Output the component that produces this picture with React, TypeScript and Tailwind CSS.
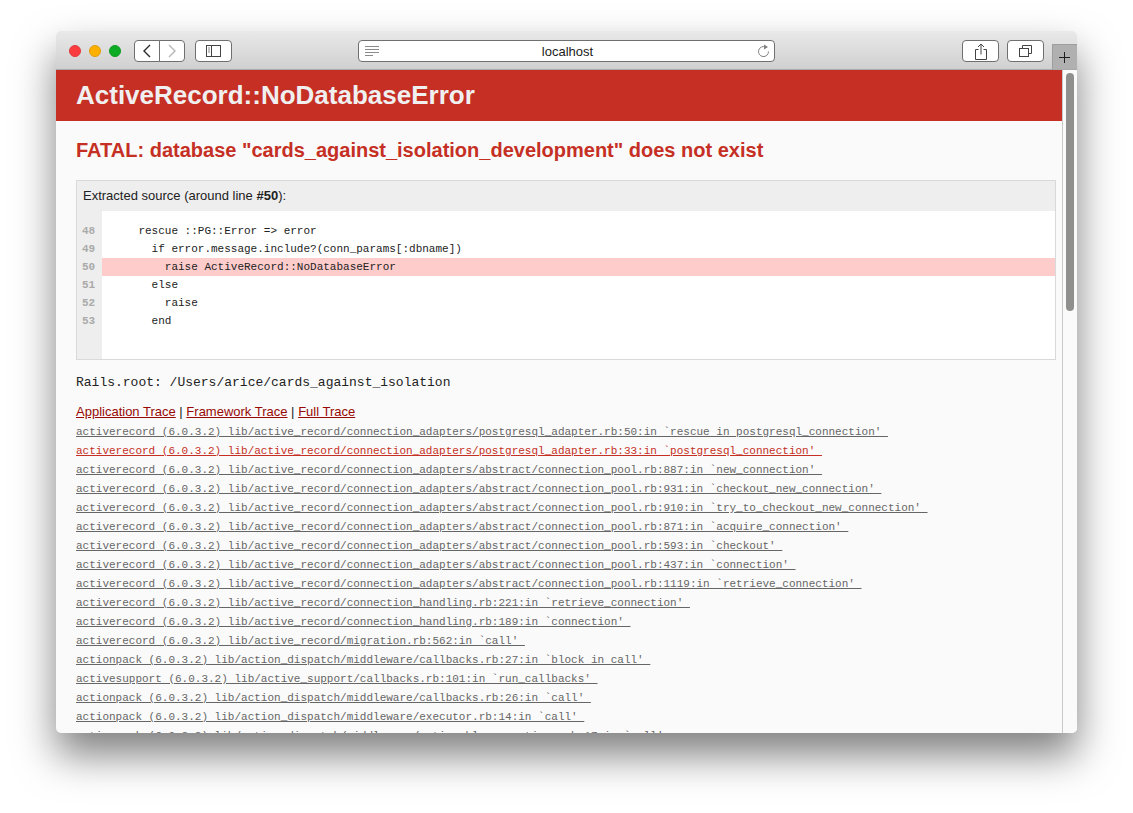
const source = [
  { num: 48, code: "    rescue ::PG::Error => error" },
  { num: 49, code: "      if error.message.include?(conn_params[:dbname])" },
  { num: 50, code: "        raise ActiveRecord::NoDatabaseError", active: true },
  { num: 51, code: "      else" },
  { num: 52, code: "        raise" },
  { num: 53, code: "      end" },
];

const trace = [
  "activerecord (6.0.3.2) lib/active_record/connection_adapters/postgresql_adapter.rb:50:in `rescue in postgresql_connection' ",
  "activerecord (6.0.3.2) lib/active_record/connection_adapters/postgresql_adapter.rb:33:in `postgresql_connection' ",
  "activerecord (6.0.3.2) lib/active_record/connection_adapters/abstract/connection_pool.rb:887:in `new_connection' ",
  "activerecord (6.0.3.2) lib/active_record/connection_adapters/abstract/connection_pool.rb:931:in `checkout_new_connection' ",
  "activerecord (6.0.3.2) lib/active_record/connection_adapters/abstract/connection_pool.rb:910:in `try_to_checkout_new_connection' ",
  "activerecord (6.0.3.2) lib/active_record/connection_adapters/abstract/connection_pool.rb:871:in `acquire_connection' ",
  "activerecord (6.0.3.2) lib/active_record/connection_adapters/abstract/connection_pool.rb:593:in `checkout' ",
  "activerecord (6.0.3.2) lib/active_record/connection_adapters/abstract/connection_pool.rb:437:in `connection' ",
  "activerecord (6.0.3.2) lib/active_record/connection_adapters/abstract/connection_pool.rb:1119:in `retrieve_connection' ",
  "activerecord (6.0.3.2) lib/active_record/connection_handling.rb:221:in `retrieve_connection' ",
  "activerecord (6.0.3.2) lib/active_record/connection_handling.rb:189:in `connection' ",
  "activerecord (6.0.3.2) lib/active_record/migration.rb:562:in `call' ",
  "actionpack (6.0.3.2) lib/action_dispatch/middleware/callbacks.rb:27:in `block in call' ",
  "activesupport (6.0.3.2) lib/active_support/callbacks.rb:101:in `run_callbacks' ",
  "actionpack (6.0.3.2) lib/action_dispatch/middleware/callbacks.rb:26:in `call' ",
  "actionpack (6.0.3.2) lib/action_dispatch/middleware/executor.rb:14:in `call' ",
  "actionpack (6.0.3.2) lib/action_dispatch/middleware/actionable_exceptions.rb:17:in `call' ",
];

function ToolButton({ className, children }: { className: string; children: React.ReactNode }) {
  return (
    <div className={`h-[22px] flex items-center justify-center bg-white border border-[#6f6f6f] rounded-[4px] ${className}`}>
      {children}
    </div>
  );
}

function Toolbar() {
  return (
    <div className="h-[39px] shrink-0 flex items-start bg-gradient-to-b from-[#e9e9e9] to-[#d0d0d0] border-b border-[#a9a9a9]">
      <div className="flex gap-2 ml-[13px] mt-[14px]">
        <div className="w-3 h-3 rounded-full bg-[#fc3d3f] border border-[#e0393b]"></div>
        <div className="w-3 h-3 rounded-full bg-[#fdb000] border border-[#e09d0a]"></div>
        <div className="w-3 h-3 rounded-full bg-[#0dac24] border border-[#0f9a22]"></div>
      </div>
      <div className="flex ml-[13px] mt-[9px]">
        <ToolButton className="w-[26px] rounded-r-none">
          <svg width="10" height="14" viewBox="0 0 10 14" fill="none" stroke="#2b2b2b" strokeWidth="1.4">
            <path d="M8 1 L2 7 L8 13" />
          </svg>
        </ToolButton>
        <ToolButton className="w-[26px] -ml-px rounded-l-none">
          <svg width="10" height="14" viewBox="0 0 10 14" fill="none" stroke="#b5b5b5" strokeWidth="1.4">
            <path d="M2 1 L8 7 L2 13" />
          </svg>
        </ToolButton>
      </div>
      <ToolButton className="w-[37px] ml-[10px] mt-[9px]">
        <svg width="15" height="12" viewBox="0 0 15 12" fill="none" stroke="#444444">
          <rect x="0.5" y="0.5" width="14" height="11" />
          <path d="M5.5 0.5 V11.5" />
          <path d="M2 3 H4 M2 5 H4 M2 7 H4" stroke="#888888" />
        </svg>
      </ToolButton>
      <ToolButton className="w-[417px] ml-[126px] mt-[9px] pl-[2px] relative">
        <svg className="absolute left-[6px] top-[5px]" width="15" height="10" viewBox="0 0 15 10" stroke="#8a8a8a">
          <path d="M0 0.5 H14 M0 3.5 H14 M0 6.5 H14 M0 9.5 H8" />
        </svg>
        <span className="text-[13px] leading-none text-[#1c1c1c]">localhost</span>
        <svg className="absolute right-[4px] top-[3px]" width="13" height="14" viewBox="0 0 13 14" fill="none" stroke="#7f7f7f">
          <path d="M8.5 3 A5 5 0 1 0 11.5 7.5" />
          <path d="M7 0.5 L11 3 L7 5.5 Z" fill="#7f7f7f" stroke="none" />
        </svg>
      </ToolButton>
      <ToolButton className="w-[37px] ml-[187px] mt-[9px]">
        <svg width="12" height="17" viewBox="0 0 12 17" fill="none" stroke="#444444">
          <path d="M3.5 6.5 H0.5 V16.5 H11.5 V6.5 H8.5" />
          <path d="M6 1 V11.5" />
          <path d="M3 4 L6 1 L9 4" />
        </svg>
      </ToolButton>
      <ToolButton className="w-[37px] ml-[8px] mt-[9px]">
        <svg width="13" height="12" viewBox="0 0 13 12" fill="none" stroke="#444444">
          <rect x="0.5" y="3.5" width="9" height="8" />
          <path d="M3.5 3.5 V0.5 H12.5 V8.5 H9.5" />
        </svg>
      </ToolButton>
      <div className="w-[25px] h-[25px] ml-[8px] mt-[13px] pr-[2px] flex items-center justify-center bg-[#b0b0b0] border-l border-t border-[#9e9e9e]">
        <svg width="11" height="11" viewBox="0 0 11 11" stroke="#1f1f1f">
          <path d="M5.5 0 V11 M0 5.5 H11" />
        </svg>
      </div>
    </div>
  );
}

function ExtractedSource() {
  return (
    <div className="h-[180px] mt-[17px] border border-[#d9d9d9] bg-[#eeeeee] flex flex-col">
      <div className="h-[30px] shrink-0 pl-[6px] flex items-center text-[13px] text-[#222222]">
        <span>
          Extracted source (around line <b>#50</b>):
        </span>
      </div>
      <div className="flex-1 flex">
        <div className="w-[25px] shrink-0 pt-[11px] pl-[5px] font-['Liberation_Mono',monospace] text-[11px] leading-[18px] font-bold text-[#aaaaaa]">
          {source.map((line) => (
            <div key={line.num}>{line.num}</div>
          ))}
        </div>
        <div className="flex-1 bg-white pt-[11px] font-['Liberation_Mono',monospace] text-[11px] leading-[18px] text-[#222222]">
          {source.map((line) => (
            <div key={line.num} className={`h-[18px] pl-[10px] whitespace-pre ${line.active ? "bg-[#ffcccc]" : ""}`}>
              {line.code}
            </div>
          ))}
        </div>
      </div>
    </div>
  );
}

export default function App() {
  return (
    <div className="w-[1133px] h-[813px] bg-white overflow-hidden pt-[31px] pl-[56px] font-['Liberation_Sans',sans-serif]">
      <div className="w-[1021px] h-[702px] flex flex-col rounded-[5px] overflow-hidden bg-[#fafafa] shadow-[0_22px_40px_rgba(0,0,0,0.5)]">
        <Toolbar />
        <div className="flex-1 min-h-0 flex">
          <div className="flex-1 min-w-0 overflow-hidden">
            <div className="h-[51px] pl-[20px] flex items-center bg-[#c52f24]">
              <h1 className="text-[26px] font-bold text-[#f0f0f0]">ActiveRecord::NoDatabaseError</h1>
            </div>
            <div className="pl-[20px] pr-[6px]">
              <h2 className="mt-[16px] text-[20px] leading-[26px] font-bold text-[#c52f24]">
                FATAL: database "cards_against_isolation_development" does not exist
              </h2>
              <ExtractedSource />
              <div className="mt-[15px] font-['Liberation_Mono',monospace] text-[13px] leading-[16px] text-[#222222] whitespace-pre">
                Rails.root: /Users/arice/cards_against_isolation
              </div>
              <div className="mt-[13px] text-[13px] leading-[16px] text-[#222222]">
                <a className="underline text-[#980905]">Application Trace</a> |{" "}
                <a className="underline text-[#980905]">Framework Trace</a> |{" "}
                <a className="underline text-[#980905]">Full Trace</a>
              </div>
              <div className="mt-[3px] font-['Liberation_Mono',monospace] text-[11px] leading-[19px] text-[#666666]">
                {trace.map((line, i) => (
                  <div key={i} className="h-[19px] whitespace-pre">
                    <a className={`underline ${i === 1 ? "text-[#c52f24]" : ""}`}>{line}</a>
                  </div>
                ))}
              </div>
            </div>
          </div>
          <div className="w-[15px] shrink-0 border-l border-[#c9c9c9] bg-[#fafafa] pl-[3px] pt-[3px]">
            <div className="w-[8px] h-[238px] rounded-full bg-[#8f8f8d]"></div>
          </div>
        </div>
      </div>
    </div>
  );
}
